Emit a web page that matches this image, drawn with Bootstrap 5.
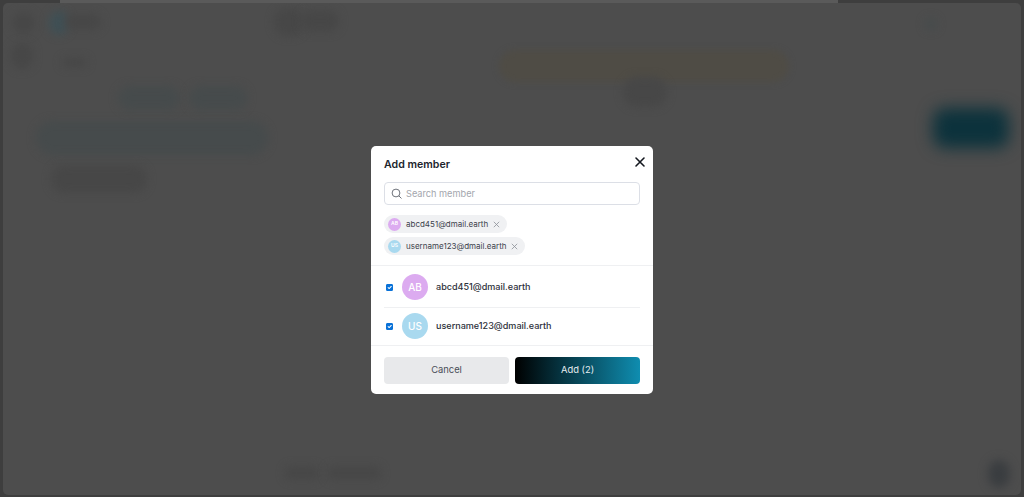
<!DOCTYPE html>
<html lang="en">
<head>
<meta charset="utf-8">
<title>Add member</title>
<link href="https://cdn.jsdelivr.net/npm/bootstrap@5.3.0/dist/css/bootstrap.min.css" rel="stylesheet">
<style>
html,body{height:100%;margin:0;overflow:hidden;background:#3e3e3e;font-family:"Inter","Liberation Sans",sans-serif}
.stage{position:fixed;inset:0;background:#3e3e3e;overflow:hidden}
.topstrip{position:absolute;left:60px;top:0;width:778px;height:3px;background:#5a5a5a}
.canvas{position:absolute;left:3px;top:3px;right:3px;bottom:2px;background:#4d4d4d;border-radius:5px;overflow:hidden}
.blob{position:absolute;border-radius:20px;filter:blur(4px)}
.b-grey{background:#474747}
.b-cool{background:#464b4c}
.b-teal{background:#405055}
.b-sand{background:#4f4c45;border-radius:16px;filter:blur(3px)}
.b-cta{background:#0c323c;border-radius:12px;filter:blur(8px)}
.b-dark{background:#3a3d40;border-radius:50%;filter:blur(5px)}
.veil{position:fixed;inset:0;display:flex;align-items:flex-start;justify-content:center;padding-top:146px}
.dialog-box{width:282px;height:248px;border:0;border-radius:5px;background:#fff;display:flex;flex-direction:column;color:#1f2430;overflow:hidden;position:relative}
.box-head{padding:11px 13px 0;height:36px}
.box-title{font-size:10.6px;font-weight:600;line-height:16px;margin:0;color:#20242c}
.x-btn{position:absolute;right:6px;top:9px;width:14px;height:14px;padding:0;border:0;background:none;line-height:0;color:#14181f}
.search-row{margin:0 13px;height:23px;border:1px solid #dcdfe6;border-radius:4px;display:flex;align-items:center;gap:4px;padding:0 6px}
.search-input{border:0;outline:0;padding:1px 0 0;width:100%;font:400 9.2px/14px "Inter","Liberation Sans",sans-serif;color:#9ea2aa;background:none}
.search-input::placeholder{color:#a3a6ad;opacity:1}
.chips{padding:10px 13px 0;height:61px;display:flex;flex-direction:column;align-items:flex-start;gap:4px;border-bottom:1px solid #eff0f2}
.chip{height:18px;border-radius:9px;background:#f0f1f3;display:flex;align-items:center;padding:0 7px 0 4px;font-size:8px;color:#3d424c;gap:5px}
.chip-av{width:13px;height:13px;border-radius:50%;font-size:5px;font-weight:600;color:#fff;display:flex;align-items:center;justify-content:center}
.tone-a{background:#dcabf0}
.tone-b{background:#a9d9ef}
.member{margin:0 13px;height:41px;padding-top:1px;display:flex;align-items:center}
.member+.member{height:37px;padding-top:0;border-top:1px solid #eff0f2}
.member .form-check-input{width:7px;height:7px;min-width:7px;margin:0 9px 0 2px;border-radius:1px;background-color:#0a72d8;border-color:#0a72d8;background-size:7px}
.member-av{width:26px;height:26px;border-radius:50%;font-size:10px;font-weight:500;color:#fff;display:flex;align-items:center;justify-content:center;margin-right:8px}
.member-mail{font-size:9.05px;font-weight:500;color:#2c303a}
.box-foot{margin-top:auto;border-top:1px solid #eff0f2;padding:11px 13px 10px;display:flex;gap:6px}
.act{flex:1 1 0;height:27px;padding:0 0 2px;border:0;border-radius:4px;font-size:9.4px;font-weight:400;line-height:25px}
.act-cancel{background:#e8e9eb;color:#4a4e57}
.act-add{background:linear-gradient(90deg,#000 0%,#0f8db0 100%);color:#e6edf0}
</style>
</head>
<body>
<div class="stage">
  <div class="topstrip"></div>
  <div class="canvas">
    <div class="blob b-grey" style="left:9px;top:9px;width:23px;height:22px"></div>
    <div class="blob b-teal" style="left:46px;top:8px;width:20px;height:24px"></div>
    <div class="blob b-grey" style="left:62px;top:11px;width:36px;height:16px"></div>
    <div class="blob b-grey" style="left:271px;top:5px;width:30px;height:28px"></div>
    <div class="blob b-grey" style="left:298px;top:7px;width:38px;height:22px"></div>
    <div class="blob b-grey" style="left:8px;top:40px;width:22px;height:26px"></div>
    <div class="blob b-grey" style="left:59px;top:55px;width:25px;height:9px"></div>
    <div class="blob b-cool" style="left:115px;top:83px;width:62px;height:24px"></div>
    <div class="blob b-cool" style="left:186px;top:83px;width:58px;height:24px"></div>
    <div class="blob b-cool" style="left:33px;top:118px;width:232px;height:34px"></div>
    <div class="blob b-grey" style="left:48px;top:162px;width:96px;height:28px"></div>
    <div class="blob b-sand" style="left:496px;top:47px;width:290px;height:32px"></div>
    <div class="blob b-grey" style="left:620px;top:74px;width:44px;height:30px"></div>
    <div class="blob b-cool" style="left:922px;top:15px;width:12px;height:12px"></div>
    <div class="blob b-cta" style="left:930px;top:105px;width:76px;height:40px"></div>
    <div class="blob b-grey" style="left:282px;top:463px;width:34px;height:14px"></div>
    <div class="blob b-grey" style="left:324px;top:463px;width:54px;height:14px"></div>
    <div class="blob b-dark" style="left:985px;top:457px;width:22px;height:28px"></div>
  </div>
  <div class="veil" role="dialog" aria-label="Add member">
    <div class="dialog-box">
      <div class="box-head">
        <h5 class="box-title">Add member</h5>
        <button type="button" class="x-btn" aria-label="Close">
          <svg width="14" height="14" viewBox="0 0 14 14"><path d="M3 3l8 8M11 3l-8 8" stroke="currentColor" stroke-width="1.6" stroke-linecap="round"/></svg>
        </button>
      </div>
      <div class="search-row">
        <svg width="11" height="11" viewBox="0 0 11 11" class="flex-shrink-0"><circle cx="5" cy="5" r="3.9" fill="none" stroke="#6f737b"/><path d="M8 8l2.2 2.2" stroke="#6f737b" stroke-linecap="round"/></svg>
        <input class="search-input" type="text" placeholder="Search member">
      </div>
      <div class="chips">
        <div class="chip">
          <span class="chip-av tone-a">AB</span><span>abcd451@dmail.earth</span>
          <svg width="7" height="7" viewBox="0 0 7 7"><path d="M.8.8l5.4 5.4M6.2.8L.8 6.2" stroke="#8c9097" stroke-width=".8"/></svg>
        </div>
        <div class="chip">
          <span class="chip-av tone-b">US</span><span>username123@dmail.earth</span>
          <svg width="7" height="7" viewBox="0 0 7 7"><path d="M.8.8l5.4 5.4M6.2.8L.8 6.2" stroke="#8c9097" stroke-width=".8"/></svg>
        </div>
      </div>
      <div class="member">
        <input class="form-check-input" type="checkbox" checked aria-label="abcd451@dmail.earth">
        <span class="member-av tone-a">AB</span><span class="member-mail">abcd451@dmail.earth</span>
      </div>
      <div class="member">
        <input class="form-check-input" type="checkbox" checked aria-label="username123@dmail.earth">
        <span class="member-av tone-b">US</span><span class="member-mail">username123@dmail.earth</span>
      </div>
      <div class="box-foot">
        <button type="button" class="btn act act-cancel">Cancel</button>
        <button type="button" class="btn act act-add">Add (2)</button>
      </div>
    </div>
  </div>
</div>
<script src="https://cdn.jsdelivr.net/npm/bootstrap@5.3.0/dist/js/bootstrap.bundle.min.js"></script>
</body>
</html>
